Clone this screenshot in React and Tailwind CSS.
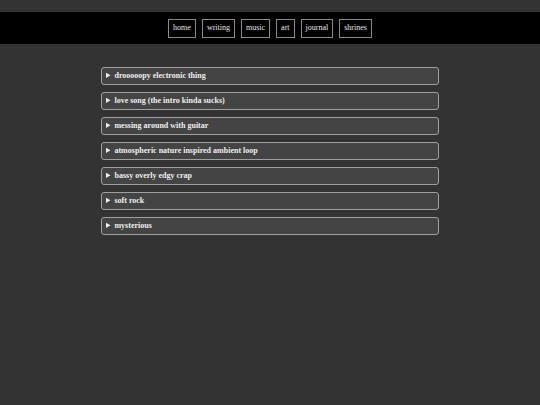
import React from "react";

const links = ["home", "writing", "music", "art", "journal", "shrines"];

const songs = [
  "drooooopy electronic thing",
  "love song (the intro kinda sucks)",
  "messing around with guitar",
  "atmospheric nature inspired ambient loop",
  "bassy overly edgy crap",
  "soft rock",
  "mysterious",
];

export default function App() {
  return (
    <div
      className="min-h-screen w-full bg-[#333333] pt-[12px] antialiased"
      style={{ fontFamily: '"Liberation Serif", "Times New Roman", serif' }}
    >
      <nav className="flex h-[32px] items-center justify-center gap-[6px] bg-black">
        {links.map((l) => (
          <a
            key={l}
            href="#"
            onClick={(e) => e.preventDefault()}
            className="flex h-[19px] items-center border border-[#8a8a8a] px-[4px] text-[8px] text-[#e6e6e6]"
          >
            {l}
          </a>
        ))}
      </nav>

      <main className="mx-auto mt-[23px] flex w-[338px] flex-col gap-[7px]">
        {songs.map((s) => (
          <details
            key={s}
            className="rounded-[3px] border border-[#a0a0a0] bg-[#444444] text-[#eeeeee]"
          >
            <summary className="cursor-pointer px-[4px] text-[8px] font-bold leading-[16px]">
              {s}
            </summary>
          </details>
        ))}
      </main>
    </div>
  );
}
